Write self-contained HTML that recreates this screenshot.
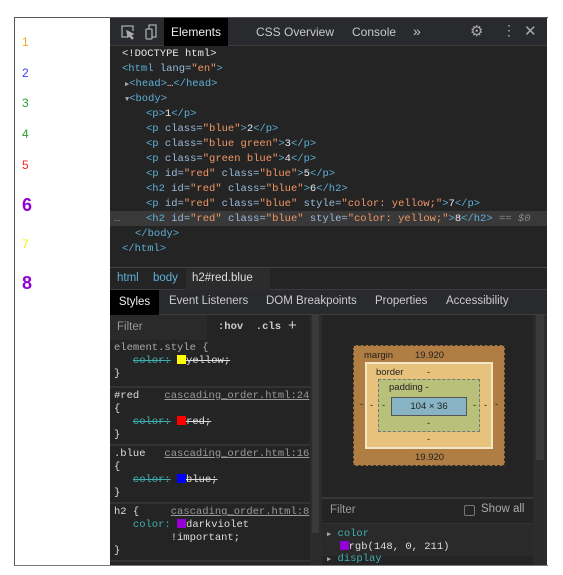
<!DOCTYPE html>
<html><head><style>
*{margin:0;padding:0;box-sizing:border-box}
body{width:563px;height:575px;background:#fff;position:relative;overflow:hidden;font-family:"Liberation Sans",sans-serif}
.a{position:absolute}
.frame{left:14px;top:17px;width:534px;height:549px;border:1px solid #555;border-right:none;border-bottom:1px solid #777}
.num{position:absolute;left:22px;font-size:12px}
.dt{left:110px;top:18px;width:437px;height:547px;background:#242424}
.tb{left:0;top:0;width:437px;height:28px;background:#292a2d;border-bottom:1px solid #3c3c3c;font-size:12px;color:#c8c8c8}
.mono{font-family:"Liberation Mono",monospace;font-size:10.5px}
.dom div{position:absolute;white-space:pre;color:#e8e8e8}
.t{color:#5db0d7}.at{color:#9bbbdc}.v{color:#f29766}
.ss{color:#ccc;font-size:11.5px}
.r{white-space:pre;line-height:13px;color:#ddd}
.sw{display:inline-block;width:9px;height:9px;vertical-align:-1px}
</style></head><body>
<div class="a frame"></div>
<div class="num" style="top:35px;color:#f5a623">1</div>
<div class="num" style="top:66px;color:#3b3bff">2</div>
<div class="num" style="top:96px;color:#2e9e2e">3</div>
<div class="num" style="top:127px;color:#2e9e2e">4</div>
<div class="num" style="top:158px;color:#ff2020">5</div>
<div class="num" style="top:195px;color:#9400d3;font-size:18px;font-weight:bold">6</div>
<div class="num" style="top:237px;color:#f5f000">7</div>
<div class="num" style="top:273px;color:#9400d3;font-size:18px;font-weight:bold">8</div>

<div class="a dt">
 <div class="a tb">
  <svg class="a" style="left:10px;top:6px" width="40" height="16" viewBox="0 0 40 16" fill="none" stroke="#aaa" stroke-width="1.3"><path d="M8 13H2V2h11v5"/><path d="M7 7l6 3-2.5 1 2.5 3-1 .8-2.5-3L8 13z" fill="#aaa"/><rect x="26" y="5" width="6" height="10" rx="1"/><path d="M29 5V1h7v12h-4"/></svg>
  <div class="a" style="left:54px;top:0;width:64px;height:28px;background:#000;color:#eee;text-align:center;line-height:28px">Elements</div>
  <div class="a" style="left:146px;top:7px">CSS Overview</div>
  <div class="a" style="left:242px;top:7px">Console</div>
  <div class="a" style="left:303px;top:5px;font-size:14px">»</div>
  <div class="a" style="left:360px;top:4px;font-size:15px;color:#aaa">⚙</div>
  <div class="a" style="left:392px;top:4px;font-size:14px;color:#aaa">⋮</div>
  <div class="a" style="left:414px;top:4px;font-size:15px;color:#aaa">✕</div>
 </div>
 <div class="mono dom">
  <div style="left:12px;top:30px">&lt;!DOCTYPE html&gt;</div>
  <div style="left:12px;top:45px"><span class="t">&lt;html </span><span class="at">lang=</span><span class="v">"en"</span><span class="t">&gt;</span></div>
  <div style="left:15px;top:60px"><span style="color:#aaa;font-size:7px">▶</span><span class="t">&lt;head&gt;</span>…<span class="t">&lt;/head&gt;</span></div>
  <div style="left:15px;top:75px"><span style="color:#aaa;font-size:7px">▼</span><span class="t">&lt;body&gt;</span></div>
  <div style="left:36px;top:90px"><span class="t">&lt;p&gt;</span>1<span class="t">&lt;/p&gt;</span></div>
  <div style="left:36px;top:105px"><span class="t">&lt;p </span><span class="at">class=</span><span class="v">"blue"</span><span class="t">&gt;</span>2<span class="t">&lt;/p&gt;</span></div>
  <div style="left:36px;top:120px"><span class="t">&lt;p </span><span class="at">class=</span><span class="v">"blue green"</span><span class="t">&gt;</span>3<span class="t">&lt;/p&gt;</span></div>
  <div style="left:36px;top:135px"><span class="t">&lt;p </span><span class="at">class=</span><span class="v">"green blue"</span><span class="t">&gt;</span>4<span class="t">&lt;/p&gt;</span></div>
  <div style="left:36px;top:150px"><span class="t">&lt;p </span><span class="at">id=</span><span class="v">"red"</span> <span class="at">class=</span><span class="v">"blue"</span><span class="t">&gt;</span>5<span class="t">&lt;/p&gt;</span></div>
  <div style="left:36px;top:165px"><span class="t">&lt;h2 </span><span class="at">id=</span><span class="v">"red"</span> <span class="at">class=</span><span class="v">"blue"</span><span class="t">&gt;</span>6<span class="t">&lt;/h2&gt;</span></div>
  <div style="left:36px;top:180px"><span class="t">&lt;p </span><span class="at">id=</span><span class="v">"red"</span> <span class="at">class=</span><span class="v">"blue"</span> <span class="at">style=</span><span class="v">"color: yellow;"</span><span class="t">&gt;</span>7<span class="t">&lt;/p&gt;</span></div>
  <div style="left:0;top:193px;width:437px;height:15px;background:#393939"></div>
  <div style="left:4px;top:195px;color:#888">…</div>
  <div style="left:36px;top:195px"><span class="t">&lt;h2 </span><span class="at">id=</span><span class="v">"red"</span> <span class="at">class=</span><span class="v">"blue"</span> <span class="at">style=</span><span class="v">"color: yellow;"</span><span class="t">&gt;</span>8<span class="t">&lt;/h2&gt;</span><span style="color:#888"> == <i>$0</i></span></div>
  <div style="left:25px;top:210px"><span class="t">&lt;/body&gt;</span></div>
  <div style="left:12px;top:225px"><span class="t">&lt;/html&gt;</span></div>
 </div>
 <div class="a" style="left:0;top:249px;width:437px;height:1px;background:#444"></div>
 <div class="a ss" style="left:0;top:250px;width:437px;height:22px;background:#242424;border-bottom:1px solid #3c3c3c">
  <span class="a" style="left:7px;top:4px;color:#5db0d7">html</span>
  <span class="a" style="left:43px;top:4px;color:#5db0d7">body</span>
  <span class="a" style="left:76px;top:0;height:22px;width:84px;background:#2c2c2c"></span>
  <span class="a" style="left:82px;top:4px;color:#ddd">h2#red.blue</span>
 </div>
 <div class="a ss" style="left:0;top:272px;width:437px;height:25px;background:#292a2d;border-bottom:1px solid #3c3c3c">
  <span class="a" style="left:0;top:0;width:49px;height:25px;background:#000;color:#eee;text-align:center;line-height:25px">Styles</span>
  <span class="a" style="left:59px;top:5px">Event Listeners</span>
  <span class="a" style="left:156px;top:5px">DOM Breakpoints</span>
  <span class="a" style="left:265px;top:5px">Properties</span>
  <span class="a" style="left:336px;top:5px">Accessibility</span>
 </div>
 <!-- styles pane -->
 <div class="a" style="left:0;top:297px;width:200px;height:250px;background:#242424">
  <div class="a" style="left:0;top:0;width:97px;height:25px;background:#2a2a2a;color:#999;font-size:11.5px;padding:6px 7px">Filter</div>
  <div class="a mono" style="left:108px;top:6px;color:#ccc;font-weight:bold">:hov &nbsp;.cls</div>
  <div class="a" style="left:178px;top:2px;color:#ccc;font-size:15px">+</div>
  <div class="a mono r" style="left:4px;top:27px"><span style="color:#aaa">element.style {</span>
   <s style="color:#3fb0b0">color:</s> <span class="sw" style="background:#ff0"></span><s>yellow;</s>
}</div>
  <div class="a" style="left:0;top:71px;width:200px;height:2px;background:#333"></div>
  <div class="a mono r" style="left:4px;top:75px">#red    <u style="color:#999">cascading_order.html:24</u>
{
   <s style="color:#3fb0b0">color:</s> <span class="sw" style="background:#f00"></span><s>red;</s>
}</div>
  <div class="a" style="left:0;top:129px;width:200px;height:2px;background:#333"></div>
  <div class="a mono r" style="left:4px;top:133px">.blue   <u style="color:#999">cascading_order.html:16</u>
{
   <s style="color:#3fb0b0">color:</s> <span class="sw" style="background:#00f"></span><s>blue;</s>
}</div>
  <div class="a" style="left:0;top:187px;width:200px;height:2px;background:#333"></div>
  <div class="a mono r" style="left:4px;top:191px">h2 {     <u style="color:#999">cascading_order.html:8</u>
   <span style="color:#3fb0b0">color:</span> <span class="sw" style="background:#9400d3"></span>darkviolet
         !important;
}</div>
  <div class="a" style="left:0;top:245px;width:200px;height:2px;background:#333"></div>
 </div>
 <div class="a" style="left:200px;top:297px;width:12px;height:250px;background:#2c2c2c"><div class="a" style="left:2px;top:0;width:7px;height:218px;background:#3a3a3a"></div></div>
 <!-- box model -->
 <div class="a" style="left:212px;top:297px;width:225px;height:250px;background:#242424">
  <div class="a" style="left:211px;top:0;width:14px;height:250px;background:#2c2c2c"><div class="a" style="left:3px;top:0;width:8px;height:145px;background:#3a3a3a"></div></div>
  <div class="a" style="left:31px;top:30px;width:152px;height:121px;background:#b07d43;border:1px dashed #333;font-size:9.5px;color:#222">
   <span class="a" style="left:10px;top:4px">margin</span><span class="a" style="left:61px;top:4px">19.920</span>
   <span class="a" style="left:61px;top:106px">19.920</span>
   <span class="a" style="left:6px;top:53px">-</span><span class="a" style="left:141px;top:53px">-</span>
   <div class="a" style="left:11px;top:16px;width:128px;height:87px;background:#e6c27c;border:2px solid #f2e6c8">
    <span class="a" style="left:9px;top:3px">border</span><span class="a" style="left:60px;top:3px">-</span>
    <span class="a" style="left:60px;top:70px">-</span>
    <span class="a" style="left:3px;top:36px">-</span><span class="a" style="left:117px;top:36px">-</span>
    <div class="a" style="left:11px;top:15px;width:102px;height:53px;background:#b8c07a;border:1px dashed #777">
     <span class="a" style="left:10px;top:2px">padding -</span>
     <span class="a" style="left:48px;top:38px">-</span>
     <span class="a" style="left:3px;top:20px">-</span><span class="a" style="left:94px;top:20px">-</span>
     <div class="a" style="left:12px;top:17px;width:76px;height:19px;background:#88b3c4;border:1px solid #555;text-align:center;line-height:17px">104 × 36</div>
    </div>
   </div>
  </div>
  <div class="a" style="left:0;top:182px;width:211px;height:2px;background:#383838"></div>
  <div class="a" style="left:8px;top:189px;color:#999;font-size:11.5px">Filter</div>
  <div class="a" style="left:142px;top:190px;width:11px;height:11px;border:1px solid #777;border-radius:2px"></div>
  <div class="a" style="left:159px;top:188px;color:#aaa;font-size:11.5px">Show all</div>
  <div class="a" style="left:0;top:208px;width:211px;height:1px;background:#333"></div>
  <div class="a" style="left:0;top:209px;width:211px;height:32px;background:#2a2a2a"></div>
  <div class="a mono" style="left:5px;top:213px;white-space:pre;line-height:12px;color:#ddd"><span style="font-size:7px;color:#aaa">▶</span> <span style="color:#3fb0b0">color</span>
  <span class="sw" style="background:#9400d3"></span>rgb(148, 0, 211)
<span style="font-size:7px;color:#aaa">▶</span> <span style="color:#3fb0b0">display</span></div>
 </div>
</div>
</body></html>
